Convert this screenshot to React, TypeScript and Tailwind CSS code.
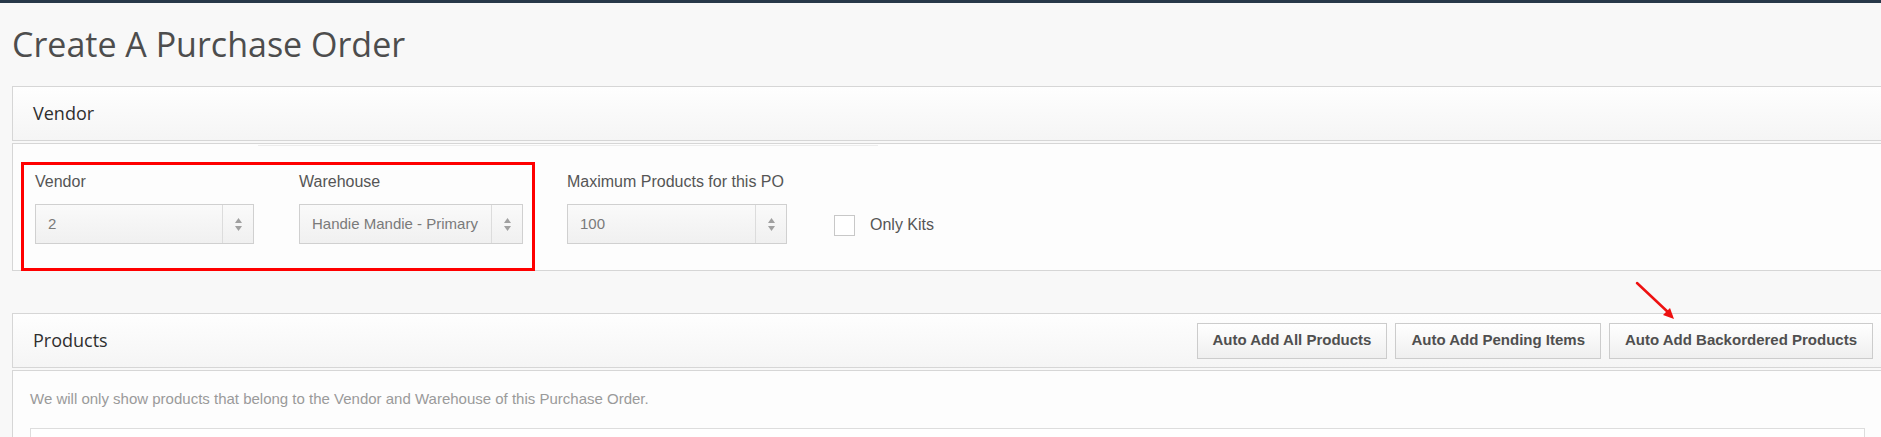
import React from 'react'

const sans = { fontFamily: '"Liberation Sans", Arial, sans-serif' }

function Spinner() {
  return (
    <div className="flex w-[31px] flex-col items-center justify-center gap-[3px] border-l border-[#dcdcdc]">
      <svg width="7" height="5" viewBox="0 0 7 5">
        <path d="M3.5 0 L7 5 L0 5 Z" fill="#a0a0a0" />
      </svg>
      <svg width="7" height="5" viewBox="0 0 7 5">
        <path d="M0 0 L7 0 L3.5 5 Z" fill="#a0a0a0" />
      </svg>
    </div>
  )
}

function SelectField({ label, value, width }: { label: string; value: string; width: string }) {
  return (
    <div className={`flex flex-col ${width}`}>
      <label className="mb-[12px] text-[16px] leading-[20px] text-[#555]">{label}</label>
      <div className="flex h-[40px] border border-[#d0d0d0] bg-gradient-to-b from-[#fafafa] to-[#f0f0f0]">
        <div className="flex flex-1 items-center pl-[12px] text-[15px] text-[#7a7a7a] whitespace-nowrap overflow-hidden">
          {value}
        </div>
        <Spinner />
      </div>
    </div>
  )
}

function PanelHeader({ title, children }: { title: string; children?: React.ReactNode }) {
  return (
    <div className="flex h-[55px] items-center justify-between border border-[#d6d6d6] bg-gradient-to-b from-[#fefefe] to-[#f5f5f5] pl-[20px] pr-[16px]">
      <h2 className="text-[18px] text-[#2f2f2f]" style={{ fontFamily: '"Open Sans", sans-serif' }}>
        {title}
      </h2>
      {children}
    </div>
  )
}

function ActionButton({ children }: { children: React.ReactNode }) {
  return (
    <button className="h-[36px] border border-[#cccccc] bg-gradient-to-b from-white to-[#efefef] px-[15px] text-[15px] font-bold text-[#4f4f4f]">
      {children}
    </button>
  )
}

export default function App() {
  return (
    <div className="relative min-h-[437px] w-full overflow-hidden bg-[#f8f8f8]" style={sans}>
      <div className="h-[3px] bg-[#283849]" />

      <div className="pl-[12px]">
        <h1
          className="mt-[18px] mb-[19px] text-[34px] leading-[46px] text-[#4d4d4d]"
          style={{ fontFamily: '"Open Sans", sans-serif' }}
        >
          Create A Purchase Order
        </h1>

        {/* Vendor panel */}
        <section className="w-[1878px]">
          <PanelHeader title="Vendor" />
          <div className="relative mt-[2px] flex h-[128px] items-start border border-[#d6d6d6] bg-[#fdfdfd] pl-[22px] pt-[28px]">
            <div className="absolute left-[245px] top-[1px] h-[1px] w-[620px] bg-[#ececec]" />
            <SelectField label="Vendor" value="2" width="w-[219px]" />
            <div className="w-[45px]" />
            <SelectField label="Warehouse" value="Handie Mandie - Primary" width="w-[224px]" />
            <div className="w-[44px]" />
            <SelectField label="Maximum Products for this PO" value="100" width="w-[220px]" />
            <div className="ml-[47px] mt-[41px] flex items-center gap-[15px]">
              <span className="h-[21px] w-[21px] border border-[#c8c8c8] bg-white" />
              <span className="text-[16px] text-[#555]">Only Kits</span>
            </div>
          </div>
        </section>

        {/* Products panel */}
        <section className="mt-[42px] w-[1878px]">
          <PanelHeader title="Products">
            <div className="flex gap-[8px]">
              <ActionButton>Auto Add All Products</ActionButton>
              <ActionButton>Auto Add Pending Items</ActionButton>
              <ActionButton>Auto Add Backordered Products</ActionButton>
            </div>
          </PanelHeader>
          <div className="mt-[2px] h-[120px] border border-[#d6d6d6] bg-[#fdfdfd] px-[17px] pt-[18px]">
            <p className="text-[15px] leading-[20px] text-[#9a9a9a]">
              We will only show products that belong to the Vendor and Warehouse of this Purchase Order.
            </p>
            <div className="mt-[19px] h-[40px] w-[1835px] border border-[#dddddd] bg-white" />
          </div>
        </section>
      </div>

      {/* annotation: red box */}
      <div className="pointer-events-none absolute left-[21px] top-[162px] h-[109px] w-[514px] border-[3px] border-[#ff0000]" />

      {/* annotation: red arrow */}
      <svg className="pointer-events-none absolute left-[1630px] top-[278px]" width="50" height="46" viewBox="0 0 50 46">
        <line x1="7" y1="5" x2="40" y2="36" stroke="#ee1111" strokeWidth="2.5" strokeLinecap="round" />
        <path d="M44 41 L33 37 L40 30 Z" fill="#ee1111" />
      </svg>
    </div>
  )
}
